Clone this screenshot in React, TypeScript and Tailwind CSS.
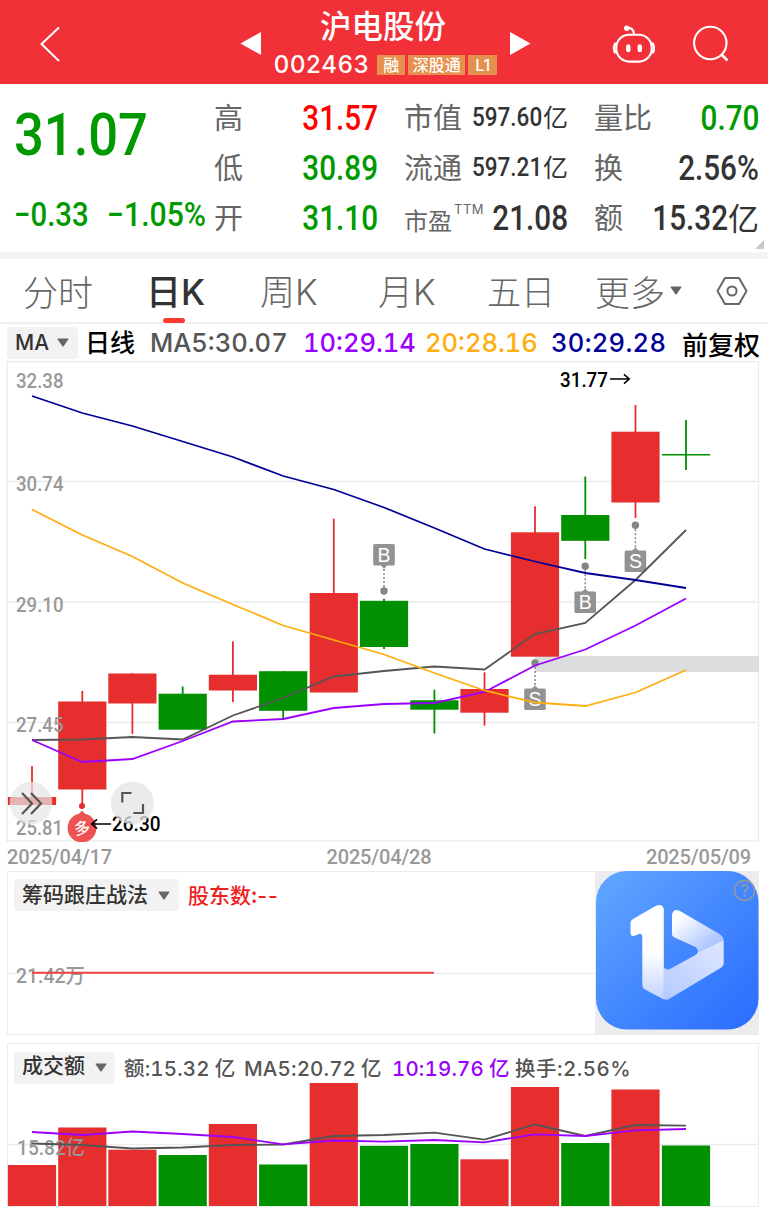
import React from "react";

const RED = "#e62e2e";
const GREEN = "#009000";

const xs = [32, 82.3, 132.4, 182.7, 232.9, 283.2, 333.8, 384, 434.4, 484.5, 535, 585.3, 635.5, 686];

// body top, body bottom, high, low
const candles = [
  { up: true, top: 797, bottom: 805, high: 766, low: 805 },
  { up: true, top: 701.5, bottom: 789.5, high: 691, low: 806 },
  { up: true, top: 673.5, bottom: 703.5, high: 673, low: 734 },
  { up: false, top: 693.7, bottom: 729.7, high: 686.5, low: 729 },
  { up: true, top: 674.7, bottom: 690.5, high: 641.3, low: 702 },
  { up: false, top: 671.2, bottom: 710.8, high: 671, low: 719 },
  { up: true, top: 593, bottom: 692.5, high: 518.7, low: 692 },
  { up: false, top: 600.8, bottom: 647, high: 598.7, low: 649 },
  { up: false, top: 700.3, bottom: 709.7, high: 689.7, low: 733.5 },
  { up: true, top: 689, bottom: 712.7, high: 672.3, low: 725.7 },
  { up: true, top: 532.3, bottom: 656.7, high: 506.3, low: 656 },
  { up: false, top: 515, bottom: 540.8, high: 476.5, low: 559 },
  { up: true, top: 431.7, bottom: 502.5, high: 405, low: 518 },
  { up: false, top: 454, bottom: 455.5, high: 420, low: 470 },
];

const ma5 = [740, 739.5, 737, 739.5, 715.5, 698, 676.5, 671, 666.5, 669.5, 634, 623, 580, 530];
const ma10 = [740, 762, 759, 741, 721.5, 719, 708, 704, 703, 692, 665.5, 649.5, 625.5, 598.5];
const ma20 = [509.5, 535, 556.5, 583, 604.5, 625.5, 640, 654.5, 673, 690.5, 702.5, 706, 692.5, 670];
const ma30 = [396, 413, 426, 441.5, 457, 476, 489.5, 507.5, 528, 549, 561.5, 573, 580, 588];

const volumes = [1165, 1127.5, 1149.7, 1155, 1124, 1164.5, 1083, 1145.8, 1144, 1159.3, 1087, 1143, 1089.5, 1145.5];
const vol5 = [1143.5, 1145, 1148.5, 1147.5, 1145, 1144.5, 1136, 1135, 1132.7, 1139.7, 1124.5, 1136, 1125, 1125.7];
const vol10 = [1132, 1135, 1131.5, 1134, 1137, 1144.3, 1140.5, 1141.7, 1140, 1142.3, 1134.3, 1136, 1130.3, 1129];

const toPoints = (ys: number[]) => ys.map((y, i) => `${xs[i]},${y}`).join(" ");

function Line({ ys, color }: { ys: number[]; color: string }) {
  return <polyline points={toPoints(ys)} fill="none" stroke={color} strokeWidth="1.8" />;
}

function Label({ x, y, w, color = "#999", children }: { x: number; y: number; w: number; color?: string; children: string }) {
  return (
    <text x={x} y={y} textLength={w} lengthAdjust="spacingAndGlyphs" fill={color} fontSize="20.5" className="font-['Roboto','Noto_Sans_CJK_SC',sans-serif] font-medium">
      {children}
    </text>
  );
}

function Marker({ x, dot, box, letter }: { x: number; dot: number; box: number; letter: string }) {
  const below = box > dot;
  return (
    <g>
      <line x1={x} x2={x} y1={dot} y2={below ? box : box + 21} stroke="#888" strokeWidth="1.5" strokeDasharray="2 2" />
      <circle cx={x} cy={dot} r="3.7" fill="#858585" />
      <path d={below ? `M${x - 4} ${box + 1}L${x} ${box - 3}L${x + 4} ${box + 1}Z` : `M${x - 4} ${box + 20}L${x} ${box + 25}L${x + 4} ${box + 20}Z`} fill="#929292" />
      <rect x={x - 10.8} y={box} width="21.6" height="21.6" rx="1.5" fill="#929292" />
      <text x={x} y={box + 17.7} textAnchor="middle" fontSize="19.5" fill="#fff" className="font-['Liberation_Sans',sans-serif]">{letter}</text>
    </g>
  );
}

function Caret({ className = "" }: { className?: string }) {
  return (
    <svg width="12" height="9" viewBox="0 0 12 9" className={className}>
      <path d="M1 0.5H11Q12 0.5 11.3 1.5L6.8 8Q6 9 5.2 8L0.7 1.5Q0 0.5 1 0.5Z" fill="#666" />
    </svg>
  );
}

function Num({ className, children }: { className: string; children: React.ReactNode }) {
  return <span className={`inline-block whitespace-nowrap font-['Roboto',sans-serif] font-medium ${className}`}>{children}</span>;
}

function Header() {
  return (
    <header className="flex h-[84px] items-center bg-[#f23037] text-white">
      <svg width="20" height="36" viewBox="0 0 20 36" fill="none" stroke="#fff" strokeWidth="2" className="ml-10 mt-1">
        <path d="M19 1.5L1.5 18L19 35" />
      </svg>
      <svg width="21" height="23" viewBox="0 0 21 23" className="ml-[180px] mt-0.5"><path d="M0.5 11.5L21 0V23Z" fill="#fff" /></svg>
      <div className="flex h-full w-[249px] flex-col items-center">
        <div className="mr-[5px] mt-[6px] h-9 text-[31.5px] font-medium leading-9">沪电股份</div>
        <div className="mt-[13px] flex h-5 items-center gap-[3px] text-[16px] font-medium leading-5">
          <span className="mr-[5px] font-['Inter'] text-[24px] tracking-[0.7px]">002463</span>
          <span className="h-5 w-7 bg-[#e5904d] text-center leading-[19px]">融</span>
          <span className="h-5 w-[57px] bg-[#e5904d] text-center leading-[19px]">深股通</span>
          <span className="h-5 w-[29px] bg-[#e5904d] text-center font-['Inter']">L1</span>
        </div>
      </div>
      <svg width="21" height="23" viewBox="0 0 21 23" className="mt-0.5"><path d="M20.5 11.5L0 0V23Z" fill="#fff" /></svg>
      <svg width="44" height="42" viewBox="612 23 44 42" fill="none" stroke="#fff" strokeWidth="2.1" className="ml-[81px] mt-1">
        <rect x="616.3" y="34.8" width="35.4" height="26.8" rx="12.8" />
        <path d="M615.8 43Q614 44.500 614 48T615.800 53M652.200 43Q654 44.500 654 48T652.200 53" strokeWidth="2.4" />
        <path d="M627 28Q633.5 27 634 34.500" />
        <circle cx="626.800" cy="28.200" r="2.700" fill="#fff" stroke="none" />
        <path d="M628.3 46.5V50M639.8 46.5V50" strokeWidth="4.4" strokeLinecap="round" />
      </svg>
      <svg width="38" height="38" viewBox="692 25 38 38" fill="none" stroke="#fff" strokeWidth="2.1" className="ml-9 mt-1">
        <circle cx="710.3" cy="43" r="16.2" />
        <path d="M721 54L727.5 60.5" strokeWidth="2.6" />
      </svg>
    </header>
  );
}

const row = "flex h-[50px] items-center justify-between";
const label = "text-[29px] leading-[47px] h-[50px] text-[#666] whitespace-nowrap";
const big = "origin-right scale-x-[0.86] text-[34.5px] leading-[50px]";

function Quote() {
  return (
    <section className="relative grid h-[168px] grid-cols-[200px_164px_163px_164px] pl-[14px] pt-[9px]">
      <div className="flex flex-col">
        <Num className="h-[96px] w-[160px] origin-left scale-x-[0.875] text-[60px] leading-[84px] text-[#009900]">31.07</Num>
        <div className="flex h-[52px] text-[33px] leading-[52px] text-[#009900]">
          <Num className="w-[93px] origin-left scale-x-[0.89]">−0.33</Num>
          <Num className="w-[105px] origin-left scale-x-[0.915]">−1.05%</Num>
        </div>
      </div>
      <div>
        <div className={row}><span className={label}>高</span><Num className={`${big} text-[#ff0000]`}>31.57</Num></div>
        <div className={row}><span className={label}>低</span><Num className={`${big} text-[#009900]`}>30.89</Num></div>
        <div className={row}><span className={label}>开</span><Num className={`${big} text-[#009900]`}>31.10</Num></div>
      </div>
      <div className="ml-[26px] w-[164px]">
        <div className={row}>
          <span className={label}>市值</span>
          <span className="flex items-center text-[#333]"><Num className="w-[71px] origin-left scale-x-[0.9] text-[25px]">597.60</Num><span className="text-[25px] leading-[46px] pb-1">亿</span></span>
        </div>
        <div className={row}>
          <span className={label}>流通</span>
          <span className="flex items-center text-[#333]"><Num className="w-[71px] origin-left scale-x-[0.9] text-[25px]">597.21</Num><span className="text-[25px] leading-[46px] pb-1">亿</span></span>
        </div>
        <div className={row}>
          <span className="flex text-[24px] text-[#666]"><span className="pt-[3px]">市盈</span><span className="ml-[2px] font-['Inter'] text-[13px] leading-5 tracking-[0.5px]">TTM</span></span>
          <Num className={`${big} -ml-8 text-[#333]`}>21.08</Num>
        </div>
      </div>
      <div className="ml-[53px] w-[165px]">
        <div className={row}><span className={label}>量比</span><Num className={`${big} text-[#009900]`}>0.70</Num></div>
        <div className={row}><span className={label}>换</span><Num className={`${big} text-[#333]`}>2.56%</Num></div>
        <div className={row}>
          <span className={label}>额</span>
          <span className="flex items-center text-[#333]"><Num className={big}>15.32</Num><span className="h-[50px] text-[31px] leading-[47px]">亿</span></span>
        </div>
      </div>
      <svg width="9" height="9" viewBox="0 0 9 9" className="absolute bottom-[3px] right-[4px]"><path d="M9 0V9H0Z" fill="#c8c8c8" /></svg>
    </section>
  );
}

function Tabs() {
  return (
    <nav className="flex h-[65px] items-center border-b-2 border-[#f0f0f0] pl-[23px] text-[35px] leading-[60px] text-[#666] font-light whitespace-nowrap">
      <span className="w-[123px]">分时</span>
      <span className="relative w-[114px] font-medium text-[#333]">
        日<span className="font-['Inter']">K</span>
        <i className="absolute bottom-[-1px] left-[17px] h-[5px] w-[22px] rounded-full bg-[#ff3b30]" />
      </span>
      <span className="w-[118px]">周<span className="font-['Inter']">K</span></span>
      <span className="w-[109px]">月<span className="font-['Inter']">K</span></span>
      <span className="w-[108px] text-[34px]">五日</span>
      <span className="w-[75px]">更多</span>
      <Caret />
      <svg width="32" height="30" viewBox="0 0 32 30" fill="none" stroke="#666" strokeWidth="2" className="ml-[34px]">
        <path d="M9 2H23L30.5 15L23 28H9L1.5 15Z" strokeLinejoin="round" />
        <circle cx="16" cy="15" r="4.6" />
      </svg>
    </nav>
  );
}

function MaBar() {
  return (
    <div className="flex h-[37px] items-center pl-[7px] font-['Inter','Noto_Sans_CJK_SC',sans-serif] text-[25.5px] font-medium leading-9 tabular-nums whitespace-nowrap">
      <span className="flex h-8 w-[71px] items-center rounded bg-[#f2f2f2] pl-2 text-[21px] text-[#333]">
        <span className="w-[42px]">MA</span><Caret />
      </span>
      <span className="ml-[7px] w-[65px] text-[25px] text-black">日线</span>
      <span className="w-[153px] text-[#555]">MA5:30.07</span>
      <span className="w-[122px] text-[#9b00ff]">10:29.14</span>
      <span className="w-[126px] text-[#ffae10]">20:28.16</span>
      <span className="w-[131px] tracking-[0.3px] text-[#000096]">30:29.28</span>
      <span className="pt-[7px] text-[26px] text-black">前复权</span>
    </div>
  );
}

function KChart() {
  return (
    <svg width="768" height="481" viewBox="0 361 768 481" className="block">
      <g fill="none" stroke="#ececec" strokeWidth="1.3">
        <rect x="7" y="361.5" width="751.5" height="479.5" />
        <path d="M7 481.5H758M7 602H758M7 722.5H758" />
      </g>
      <rect x="535" y="656" width="224" height="16" fill="#dcdcdc" />
      {candles.map((c, i) => (
        <g key={i} fill={c.up ? RED : GREEN}>
          <rect x={xs[i] - 0.9} y={c.high} width="1.8" height={c.low - c.high} />
          <rect x={xs[i] - 24.1} y={c.top} width="48.2" height={c.bottom - c.top} />
        </g>
      ))}
      <Marker x={384} dot={591} box={544} letter="B" />
      <Marker x={535} dot={663} box={688.5} letter="S" />
      <Marker x={585.2} dot={566.3} box={591.5} letter="B" />
      <Marker x={635.4} dot={525.3} box={550.5} letter="S" />
      <Label x={16} y={388} w={47.5}>32.38</Label>
      <Label x={16} y={491} w={47.5}>30.74</Label>
      <Label x={16} y={611.5} w={47.5}>29.10</Label>
      <Label x={16} y={732} w={47.5}>27.45</Label>
      <Label x={16} y={834.5} w={47}>25.81</Label>
      <Line ys={ma5} color="#555" />
      <Line ys={ma10} color="#9b00ff" />
      <Line ys={ma20} color="#ffae10" />
      <Line ys={ma30} color="#000096" />
      <Label x={560} y={386.5} w={48} color="#000">31.77</Label>
      <path d="M610 379H629M624 374.3L629.3 379L624 383.7" fill="none" stroke="#000" strokeWidth="1.6" />

      {/* lowest price flag */}
      <circle cx="82" cy="806" r="3" fill={RED} />
      <path d="M77 816L82 810.5L87 816Z" fill="#ed5353" />
      <circle cx="82" cy="828" r="14.4" fill="#ed5353" />
      <text x="82" y="834" textAnchor="middle" fontSize="16" fill="#fff" transform="rotate(-10 82 828)" className="font-['Noto_Sans_CJK_SC',sans-serif] font-medium">多</text>
      <path d="M111 824H92M97 819.3L91.7 824L97 828.7" fill="none" stroke="#000" strokeWidth="1.6" />
      <Label x={112} y={831} w={48.5} color="#000">26.30</Label>

      {/* floating buttons */}
      <circle cx="31" cy="803" r="21.3" fill="#e6e6e6" fillOpacity="0.72" />
      <path d="M22 793L32 803.5L22 814M31 793L41 803.5L31 814" fill="none" stroke="#555" strokeWidth="2.2" />
      <circle cx="132.3" cy="803" r="21.5" fill="#e6e6e6" fillOpacity="0.78" />
      <path d="M122.3 802.5V793H131.5M143 804V813H133.3" fill="none" stroke="#555" strokeWidth="2.2" />
    </svg>
  );
}

function HoldersPanel() {
  return (
    <section className="relative ml-[7px] h-[164px] w-[752px] border border-[#ececec]">
      <div className="flex items-center pl-[6px] pt-[6px] text-[21px] font-medium leading-8">
        <span className="flex h-8 w-[165px] items-center rounded bg-[#f2f2f2] pl-2 text-[#333]">
          <span className="w-[136px] pb-[5px]">筹码跟庄战法</span><Caret />
        </span>
        <span className="ml-[9px] text-[#f02020]">股东数:<span className="font-['Inter'] tracking-[1px]">--</span></span>
      </div>
      <svg width="752" height="164" viewBox="7 871 752 164" className="absolute -left-px -top-px">
        <path d="M7 973.3H595" stroke="#ececec" strokeWidth="1.3" />
        <Label x={16} y={982.5} w={69}>21.42万</Label>
        <path d="M32 972.8H434" stroke="#f04040" strokeWidth="2" />
        <AppLogo />
        <circle cx="744.5" cy="890.5" r="10" fill="none" stroke="#999" strokeWidth="1.4" />
        <text x="744.5" y="896.5" textAnchor="middle" fontSize="17" fill="#999" className="font-['Inter',sans-serif]">?</text>
      </svg>
    </section>
  );
}

function AppLogo() {
  return (
    <g>
      <defs>
        <linearGradient id="logoBg" x1="0" y1="0" x2="1" y2="1">
          <stop offset="0" stopColor="#62a8ff" />
          <stop offset="0.5" stopColor="#4488ff" />
          <stop offset="1" stopColor="#286cff" />
        </linearGradient>
        <linearGradient id="logoStem" x1="0" y1="0" x2="0" y2="1">
          <stop offset="0.5" stopColor="#fff" />
          <stop offset="1" stopColor="#c2d3ff" />
        </linearGradient>
        <linearGradient id="logoTop" x1="0" y1="0" x2="1" y2="1">
          <stop offset="0.15" stopColor="#fff" />
          <stop offset="0.75" stopColor="#b0c7ff" />
        </linearGradient>
        <linearGradient id="logoSide" x1="0" y1="1" x2="1" y2="0">
          <stop offset="0" stopColor="#b4caff" />
          <stop offset="1" stopColor="#dfe8ff" />
        </linearGradient>
      </defs>
      <rect x="595" y="871" width="164" height="164" fill="#ececef" />
      <rect x="596" y="871" width="162.5" height="158.5" rx="31" fill="url(#logoBg)" />
      <path d="M672 914.5Q673.5 908 679.5 910.8L719.500 934Q723.700 936.500 723.700 941L697.500 954Q699 949.500 695.500 947L673.500 937Q672 936 672 934Z" fill="url(#logoTop)" />
      <path d="M723.7 940.5V962.5Q723.7 966 720.5 968L669 999Q666.5 1000.5 663.500 999V966Q665 970.500 670 969L695.500 955Q697.500 953.500 697.800 952.500Z" fill="url(#logoSide)" />
      <path d="M630.5 923Q630.5 920.500 633 919L656.500 905.500Q662.500 903.500 663.800 909V999.500L645 989.500Q642.300 988 642.300 985V936.500Q642 933 639 934L634 936Q631 936.500 630.500 933.500Z" fill="url(#logoStem)" />
    </g>
  );
}

function VolumePanel() {
  return (
    <section className="relative ml-[7px] mt-[8px] h-[164px] w-[752px] border border-[#ececec]">
      <svg width="752" height="164" viewBox="7 1043 752 164" className="absolute -left-px -top-px">
        <path d="M7 1144.5H758" stroke="#ececec" strokeWidth="1.3" />
        {volumes.map((y, i) => (
          <rect key={i} x={xs[i] - 24.1} y={y} width="48.2" height={1206 - y} fill={candles[i].up ? RED : GREEN} />
        ))}
        <Label x={17} y={1154.5} w={68}>15.82亿</Label>
        <Line ys={vol5} color="#555" />
        <Line ys={vol10} color="#9b00ff" />
      </svg>
      <div className="relative flex items-center pl-[6px] pt-[6px] font-['Inter','Noto_Sans_CJK_SC',sans-serif] text-[20.5px] font-medium leading-8 tabular-nums tracking-[0.15px] text-[#555] whitespace-nowrap">
        <span className="flex h-8 w-[101px] items-center rounded bg-[#f2f2f2] pl-2 text-[21px] tracking-normal text-[#333]">
          <span className="w-[73px] pb-[3px]">成交额</span><Caret />
        </span>
        <span className="ml-[9px] w-[120px] pt-[3px]">额:15.32<span className="ml-[5px]">亿</span></span>
        <span className="w-[148px] pt-[3px]">MA5:20.72<span className="ml-[5px]">亿</span></span>
        <span className="w-[123px] pt-[3px] text-[#9b00ff]">10:19.76<span className="ml-[5px]">亿</span></span>
        <span className="pt-[3px] tracking-[0.5px]">换手:2.56%</span>
      </div>
    </section>
  );
}

export default function App() {
  return (
    <div className="h-[1209px] w-[768px] overflow-hidden bg-white font-['Noto_Sans_CJK_SC',sans-serif]">
      <Header />
      <Quote />
      <div className="h-[7px] bg-[#f4f4f4]" />
      <Tabs />
      <MaBar />
      <KChart />
      <div className="flex h-[29px] items-center justify-between pl-[7px] pr-[17px] font-['Roboto',sans-serif] text-[20px] font-medium tracking-[-0.15px] text-[#999]">
        <span>2025/04/17</span>
        <span>2025/04/28</span>
        <span>2025/05/09</span>
      </div>
      <HoldersPanel />
      <VolumePanel />
    </div>
  );
}
